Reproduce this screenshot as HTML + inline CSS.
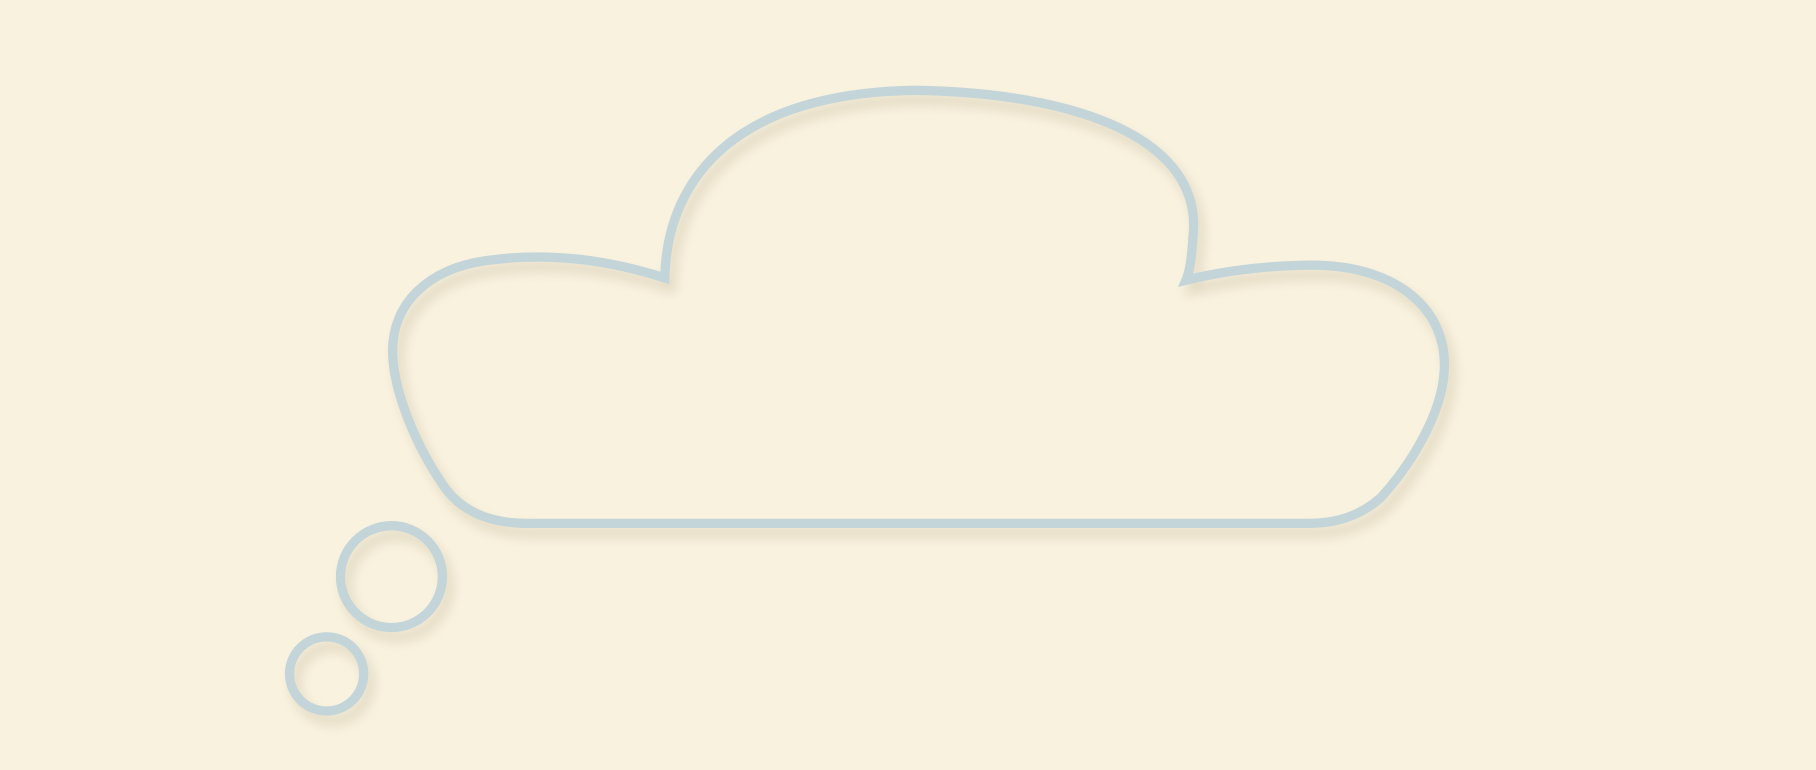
<!DOCTYPE html>
<html><head><style>
html,body{margin:0;padding:0;background:#f9f2df;width:1816px;height:770px;overflow:hidden}
svg{display:block}
</style></head><body>
<svg width="1816" height="770" viewBox="0 0 1568 665" preserveAspectRatio="none">
<defs>
<filter id="s" x="-10%" y="-10%" width="130%" height="130%">
<feDropShadow dx="5" dy="8" stdDeviation="5" flood-color="#b8ad90" flood-opacity="0.4"/>
</filter>
</defs>
<g fill="none" stroke="#c3d5d9" stroke-width="8" filter="url(#s)">
<path d="M574,240 C576,150 640,80 790,78 C930,80 1040,120 1030,205 C1029,225 1027,235 1024,242 C1060,233 1100,229 1135,229 C1210,230 1250,270 1247,320 C1245,360 1215,405 1192,430 C1175,445 1155,452 1130,452 L455,452 C420,452 395,440 380,415 C360,385 340,340 339,305 C338,262 370,232 420,225 C470,218 520,223 574,240 Z"/>
<circle cx="338" cy="498" r="44"/>
<circle cx="282" cy="582" r="32"/>
</g>
</svg>
</body></html>
